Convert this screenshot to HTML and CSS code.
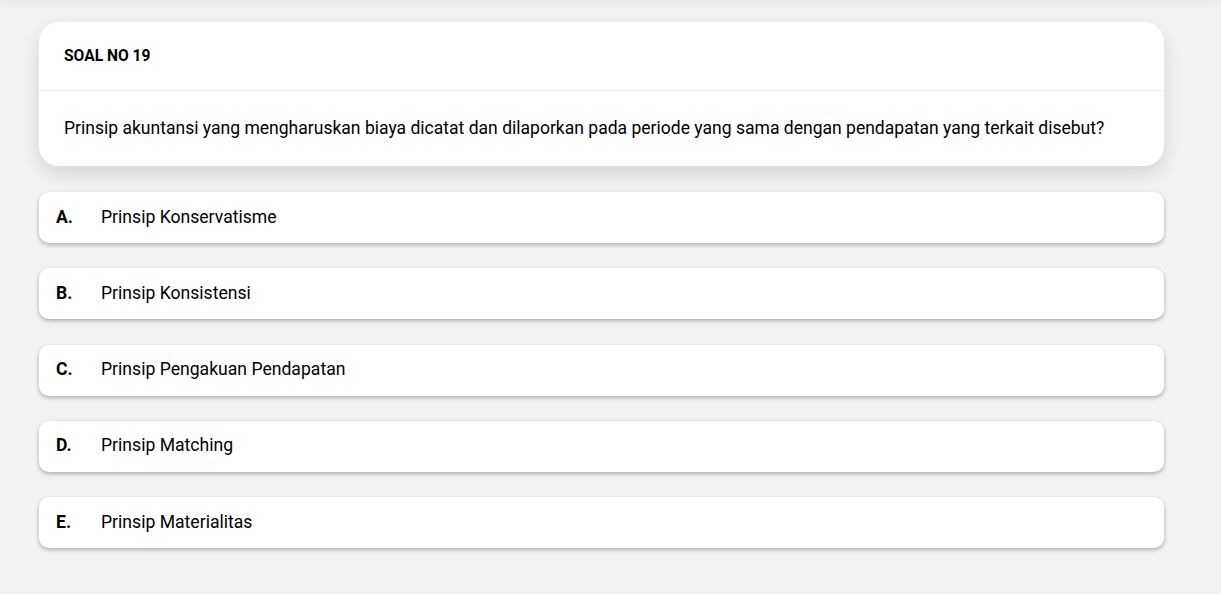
FILE: index.html
```html
<!DOCTYPE html>
<html lang="id">
<head>
<meta charset="utf-8">
<title>Soal No 19</title>
<link rel="stylesheet" href="styles.css">
</head>
<body>
<div class="top-shade"></div>
<main class="page">
  <section class="question-card">
    <header class="question-head">SOAL NO 19</header>
    <div class="question-body">Prinsip akuntansi yang mengharuskan biaya dicatat dan dilaporkan pada periode yang sama dengan pendapatan yang terkait disebut?</div>
  </section>
  <ul class="options">
    <li class="option"><span class="letter">A.</span><span class="text">Prinsip Konservatisme</span></li>
    <li class="option"><span class="letter">B.</span><span class="text">Prinsip Konsistensi</span></li>
    <li class="option"><span class="letter">C.</span><span class="text">Prinsip Pengakuan Pendapatan</span></li>
    <li class="option"><span class="letter">D.</span><span class="text">Prinsip Matching</span></li>
    <li class="option"><span class="letter">E.</span><span class="text">Prinsip Materialitas</span></li>
  </ul>
</main>
</body>
</html>
```

FILE: styles.css
```css
html, body {
  margin: 0;
  padding: 0;
}
body {
  background: #f2f2f2;
  font-family: Roboto, "Liberation Sans", Arial, sans-serif;
  color: #000;
  height: 594px;
  overflow: hidden;
  position: relative;
}
.top-shade {
  position: absolute;
  left: 0;
  right: 0;
  top: -40px;
  height: 40px;
  background: #f2f2f2;
  box-shadow: 0 2px 14px rgba(0, 0, 0, 0.06);
}
.page {
  width: 1125px;
  margin: 0 0 0 39px;
  padding-top: 22px;
}
.question-card {
  background: #fff;
  border-radius: 20px;
  box-shadow: 0 8px 20px rgba(0, 0, 0, 0.12);
}
.question-head {
  padding: 25px 25px;
  font-size: 15.6px;
  line-height: 18px;
  font-weight: 700;
  border-bottom: 1px solid #efefef;
}
.question-body {
  padding: 24px 25px 25px;
  font-size: 17.55px;
  line-height: 26px;
}
.options {
  list-style: none;
  margin: 26px 0 0;
  padding: 0;
  display: flex;
  flex-direction: column;
  gap: 25.3px;
}
.option {
  background: #fff;
  border-radius: 10px;
  box-shadow: 0 2px 4px rgba(0, 0, 0, 0.28);
  display: flex;
  align-items: center;
  box-sizing: border-box;
  height: 51px;
  padding: 0 17px 2px;
  font-size: 17.6px;
}
.letter {
  width: 45px;
  font-weight: 700;
}
```
